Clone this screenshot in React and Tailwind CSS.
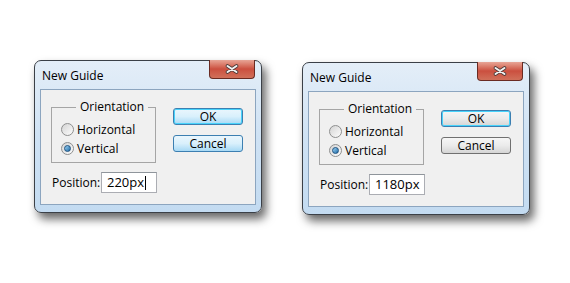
import React from 'react'

function Radio({ checked, label }) {
  return (
    <div className="flex items-center h-[19px]">
      <span className="grid h-[13px] w-[13px] place-items-center rounded-full border border-[#8e8f8f] bg-gradient-to-br from-[#d4d4d4] to-[#fdfdfd]">
        {checked && (
          <span className="h-[7px] w-[7px] rounded-full border border-[#1c5180] bg-gradient-to-br from-[#9cd4f4] to-[#1c6ca7]" />
        )}
      </span>
      <span className="ml-[3px]">{label}</span>
    </div>
  )
}

function Button({ label, primary, blue }) {
  const fill = blue ? 'from-[#eaf6fd] via-[#d9f0fc] to-[#a7d9f5]' : 'from-[#f6f6f6] via-[#ebebeb] to-[#d5d5d5]'
  const edge = primary ? 'border-[#3c7fb1] shadow-[inset_0_0_0_1px_#48d3fb]' : blue ? 'border-[#3c7fb1]' : 'border-[#707070]'
  return (
    <div className={`flex h-[17px] w-[70px] items-center justify-center rounded-[3px] border bg-gradient-to-b ${fill} ${edge}`}>
      <span className="leading-none">{label}</span>
    </div>
  )
}

function Dialog({ value, cursor, blueCancel, blueOk, className = '' }) {
  return (
    <div className={`flex h-[153px] w-[228px] flex-col rounded-[7px] border border-[#3b4047] bg-gradient-to-b from-[#e4eef8] via-[#cfe2f4] to-[#c3dbf1] px-[5px] pb-[7px] shadow-[4px_6px_10px_rgba(0,0,0,0.6)] ${className}`}>
      <div className="flex h-[28px] shrink-0 justify-between">
        <span className="mt-[6px] pl-[2px] text-[12px] text-black">New Guide</span>
        <div className="-mt-px mr-px flex h-[19px] w-[46px] items-center justify-center rounded-b-[4px] border border-t-0 border-[#6a2b22] bg-gradient-to-b from-[#e7a596] via-[#cb4f3f] to-[#d0705a]">
          <svg width="14" height="10" viewBox="0 0 14 10">
            <path d="M2.5 2 L11.5 8 M11.5 2 L2.5 8" stroke="#4a3a38" strokeWidth="3.6" strokeLinecap="round" />
            <path d="M2.5 2 L11.5 8 M11.5 2 L2.5 8" stroke="#f4f4f4" strokeWidth="2" strokeLinecap="round" />
          </svg>
        </div>
      </div>
      <div className="flex flex-1 flex-col border border-[#8ca5bf] bg-[#f0f0f0] pl-[10px] pt-[10px] text-[12px] text-black">
        <div className="flex">
          <fieldset className="h-[63px] w-[105px] border border-[#a5a5a5] pl-[9px]">
            <legend className="ml-[15px] px-[4px] leading-[14px]">Orientation</legend>
            <div className="mt-[6px]">
              <Radio label="Horizontal" />
              <Radio label="Vertical" checked />
            </div>
          </fieldset>
          <div className="ml-[17px] mt-[8px] flex flex-col gap-[10px]">
            <Button label="OK" primary blue={blueOk} />
            <Button label="Cancel" blue={blueCancel} />
          </div>
        </div>
        <div className="mt-[9px] flex items-center">
          <span className="ml-px w-[49px]">Position:</span>
          <div className="flex h-[21px] w-[56px] items-center border border-[#abadb3] border-t-[#8f959b] bg-white pl-[5px] text-[13px]">
            {value}
            {cursor && <span className="ml-px h-[14px] w-px bg-black" />}
          </div>
        </div>
      </div>
    </div>
  )
}

export default function App() {
  return (
    <div className="h-[283px] w-[570px] bg-white font-['Open_Sans',sans-serif]">
      <div className="flex items-start gap-[40px] pl-[34px] pt-[60px]">
        <Dialog value="220px" cursor blueOk blueCancel />
        <Dialog value="1180px" className="mt-[2px]" />
      </div>
    </div>
  )
}
